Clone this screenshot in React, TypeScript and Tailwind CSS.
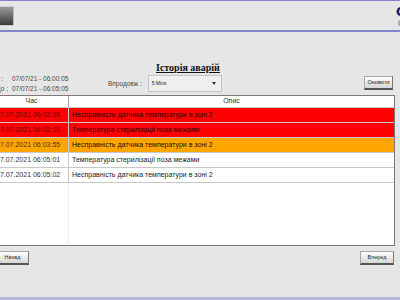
import React from 'react';

const rows = [
  { time: '27.07.2021 06:02:35', text: 'Несправність датчика температури в зоні 2', bg: 'bg-[#ff0000]', tc: 'text-[#6a0000]', dc: 'text-[#1a0000]' },
  { time: '27.07.2021 06:02:36', text: 'Температура стерилізації поза межами', bg: 'bg-[#ff0000]', tc: 'text-[#6a0000]', dc: 'text-[#1a0000]' },
  { time: '27.07.2021 06:03:55', text: 'Несправність датчика температури в зоні 2', bg: 'bg-[#ffa500]', tc: 'text-[#5a3000]', dc: 'text-[#1a1000]' },
  { time: '27.07.2021 06:05:01', text: 'Температура стерилізації поза межами', bg: 'bg-white', tc: 'text-[#333]', dc: 'text-[#222]' },
  { time: '27.07.2021 06:05:02', text: 'Несправність датчика температури в зоні 2', bg: 'bg-white', tc: 'text-[#333]', dc: 'text-[#222]' },
];

function SmallButton({ label, className = '' }: { label: string; className?: string }) {
  return (
    <div
      className={`h-[14px] flex items-center justify-center whitespace-nowrap bg-gradient-to-b from-white to-[#d6d6d6] border border-[#a8a8a8] border-b-2 border-b-[#555] border-r-[#777] text-[5.5px] text-[#222] ${className}`}
    >
      {label}
    </div>
  );
}

export default function App() {
  return (
    <div className="w-[400px] h-[300px] overflow-hidden bg-[#e6e6e6] flex flex-col" style={{ fontFamily: '"Liberation Sans", Arial, sans-serif' }}>
      {/* top bar */}
      <div className="h-[32px] shrink-0 border-t border-b-2 border-[#8484cc] flex items-center justify-between">
        <div className="-ml-[30px] w-[44px] h-[20px] border border-[#d0d0d0] border-r-[#bbb] bg-gradient-to-b from-[#9a9a9a] via-[#6a6a6a] to-[#3c3c3c]" />
        <div className="-mr-[8px] w-[12px] flex flex-col items-start leading-none text-[#141464]" style={{ fontFamily: '"DejaVu Sans", sans-serif' }}>
          <span className="text-[12px] font-bold">C</span>
          <span className="text-[6px] mt-[2px] ml-[2px]">(</span>
        </div>
      </div>

      {/* title */}
      <div className="mt-[28px] h-[12px] pl-[156px] leading-[12px]">
        <span className="text-[10px] font-bold underline text-[#111] whitespace-nowrap" style={{ fontFamily: '"Liberation Serif", serif' }}>
          Історія аварій
        </span>
      </div>

      {/* info row */}
      <div className="h-[23px] flex items-start text-[6.5px] text-[#4a4a4a] whitespace-nowrap">
        <div className="w-[108px] pt-[2px] leading-[10px]">
          <div className="flex">
            <span className="w-[14px] -ml-[11px] text-right">Від :</span>
            <span className="ml-[9px]">07/07/21 - 06:00:05</span>
          </div>
          <div className="flex">
            <span className="w-[20px] -ml-[12px] text-right">До ;</span>
            <span className="ml-[4px]">07/07/21 - 06:05:05</span>
          </div>
        </div>
        <div className="mt-[9px] leading-none">Впродовж :</div>
        <div className="ml-[6px] mt-[3px] w-[74px] h-[17px] bg-[#efefef] border border-[#c4c4c4] flex items-center justify-between px-[3px]">
          <span className="text-[5px] text-[#222]">5 Mins</span>
          <span className="w-0 h-0 border-l-[2px] border-r-[2px] border-t-[3px] border-l-transparent border-r-transparent border-t-[#333] mr-[2px]" />
        </div>
        <SmallButton label="Оновити" className="ml-auto mr-[7px] mt-[4px] w-[29px]" />
      </div>

      {/* table */}
      <div className="-ml-[5px] w-[400px] h-[151px] shrink-0 bg-white border border-[#7a7a7a] border-l-0 flex flex-col text-[7px] whitespace-nowrap">
        <div className="h-[12px] shrink-0 flex border-b border-[#c8c8c8] text-[#333]">
          <div className="w-[74px] border-r border-[#a0a0a0] flex items-center justify-center">Час</div>
          <div className="flex-1 flex items-center justify-center">Опис</div>
        </div>
        {rows.map((r, i) => (
          <div key={i} className={`h-[15px] shrink-0 flex border-b border-[#c8c8c8] ${r.bg}`}>
            <div className={`w-[74px] pl-[1px] border-r border-[#c8c8c8] flex items-center ${r.tc}`}>{r.time}</div>
            <div className={`flex-1 pl-[3px] flex items-center ${r.dc}`}>{r.text}</div>
          </div>
        ))}
        <div className="flex-1 flex">
          <div className="w-[74px] border-r border-[#eeeeee]" />
        </div>
      </div>

      {/* bottom buttons */}
      <div className="mt-[5px] h-[15px] flex justify-between">
        <SmallButton label="Назад" className="-ml-[4px] w-[33px]" />
        <SmallButton label="Вперед" className="mr-[6px] w-[34px]" />
      </div>

      <div className="mt-auto h-[3px] bg-[#b4b4dc]" />
    </div>
  );
}
